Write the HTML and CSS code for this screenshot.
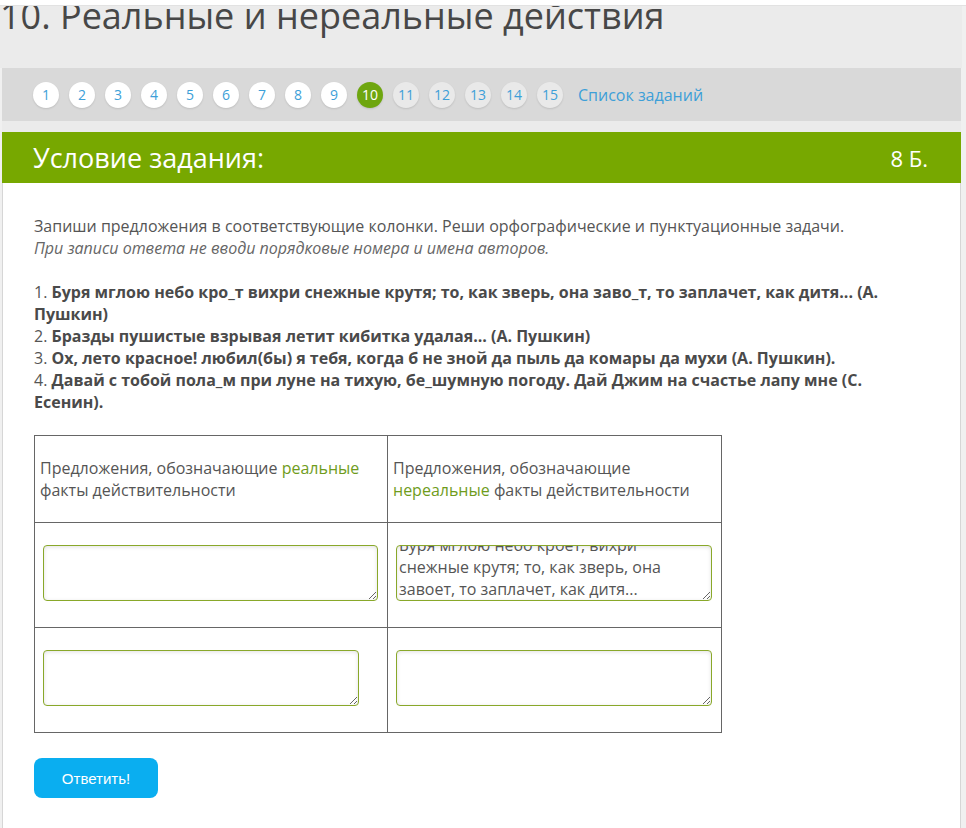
FILE: index.html
```html
<!DOCTYPE html>
<html lang="ru">
<head>
    <meta charset="UTF-8">
    <title>10. Реальные и нереальные действия</title>
    <link rel="stylesheet" href="styles.css">
</head>
<body>
    <div class="top-edge"></div>

    <h1 class="page-title">10. Реальные и нереальные действия</h1>

    <nav class="task-nav">
        <a class="task-num done" href="#">1</a>
        <a class="task-num done" href="#">2</a>
        <a class="task-num done" href="#">3</a>
        <a class="task-num done" href="#">4</a>
        <a class="task-num done" href="#">5</a>
        <a class="task-num done" href="#">6</a>
        <a class="task-num done" href="#">7</a>
        <a class="task-num done" href="#">8</a>
        <a class="task-num done" href="#">9</a>
        <a class="task-num current" href="#">10</a>
        <a class="task-num" href="#">11</a>
        <a class="task-num" href="#">12</a>
        <a class="task-num" href="#">13</a>
        <a class="task-num" href="#">14</a>
        <a class="task-num" href="#">15</a>
        <a class="task-list" href="#">Список заданий</a>
    </nav>

    <div class="task-panel">
        <div class="task-head">
            <span class="task-caption">Условие задания:</span>
            <span class="task-score">8 Б.</span>
        </div>

        <div class="task-body">
            <p class="task-text">
                Запиши предложения в соответствующие колонки. Реши орфографические и пунктуационные задачи.<br>
                <em>При записи ответа не вводи порядковые номера и имена авторов.</em>
            </p>

            <p class="task-text sentences">
                1. <b>Буря мглою небо кро_т вихри снежные крутя; то, как зверь, она заво_т, то заплачет, как дитя... (А. Пушкин)</b><br>
                2. <b>Бразды пушистые взрывая летит кибитка удалая... (А. Пушкин)</b><br>
                3. <b>Ох, лето красное! любил(бы) я тебя, когда б не зной да пыль да комары да мухи (А. Пушкин).</b><br>
                4. <b>Давай с тобой пола_м при луне на тихую, бе_шумную погоду. Дай Джим на счастье лапу мне (С. Есенин).</b>
            </p>

            <table class="answer-table">
                <tr class="head-row">
                    <td>Предложения, обозначающие <span class="accent">реальные</span> факты действительности</td>
                    <td>Предложения, обозначающие <span class="accent">нереальные</span> факты действительности</td>
                </tr>
                <tr class="input-row">
                    <td><textarea class="answer wide"></textarea></td>
                    <td><textarea class="answer scrolled" id="filled">Буря мглою небо кроет, вихри снежные крутя; то, как зверь, она завоет, то заплачет, как дитя...</textarea></td>
                </tr>
                <tr class="input-row">
                    <td><textarea class="answer"></textarea></td>
                    <td><textarea class="answer"></textarea></td>
                </tr>
            </table>

            <button class="submit-btn">Ответить!</button>
        </div>
    </div>

    <script>
        // keep the filled answer scrolled to its last line
        var filled = document.getElementById('filled');
        filled.scrollTop = filled.scrollHeight;
    </script>
</body>
</html>
```

FILE: styles.css
```css
* {
    box-sizing: border-box;
}

body {
    margin: 0;
    background: #f0f0f0;
    font-family: "Open Sans", "Noto Sans", sans-serif;
    color: #555;
}

.top-edge {
    position: fixed;
    top: 0;
    left: 0;
    right: 0;
    height: 6px;
    background: #fff;
    border-bottom: 1px solid #e2e2e2;
    z-index: 10;
}

.page-title {
    width: 962px;
    height: 74px;
    margin: -6px 0 0;
    padding: 0;
    font-size: 36px;
    font-weight: 400;
    line-height: 44px;
    color: #474747;
    background: #ebebeb;
}

/* task navigation */
.task-nav {
    width: 928px;
    height: 53px;
    margin-left: 2px;
    padding-left: 31px;
    box-sizing: content-box;
    background: #d9d9d9;
    border-bottom: 11px solid #ebebeb;
    display: flex;
    align-items: center;
    gap: 10px;
}

.task-num {
    width: 26px;
    height: 26px;
    border-radius: 50%;
    background: #e9e9e9;
    color: #3d9fd8;
    font-size: 14px;
    display: flex;
    align-items: center;
    justify-content: center;
    text-decoration: none;
    box-shadow: 0 1px 2px rgba(0, 0, 0, 0.12);
}

.task-num.done {
    background: #fff;
}

.task-num.current {
    background: #6ea60f;
    color: #fff;
}

.task-list {
    margin-left: 5px;
    color: #3d9fd8;
    font-size: 16px;
    text-decoration: none;
}

/* task panel */
.task-panel {
    width: 959px;
    margin-left: 2px;
    background: #fff;
    border-right: 1px solid #d6d6d6;
    border-left: 1px solid #d6d6d6;
}

.task-head {
    height: 51px;
    margin: 0 -1px;
    padding: 0 33px 0 31px;
    background: #77a800;
    color: #fff;
    display: flex;
    align-items: center;
    justify-content: space-between;
}

.task-caption {
    font-size: 27px;
}

.task-score {
    font-size: 22px;
}

.task-body {
    padding: 32px 31px 60px;
}

.task-text {
    margin: 0 0 22px;
    font-size: 16px;
    line-height: 22px;
    color: #555;
}

.task-text em {
    color: #666;
}

.sentences b {
    color: #4a4a4a;
}

.answer-table {
    border-collapse: collapse;
    width: 688px;
}

.answer-table td {
    border: 1px solid #666;
    vertical-align: middle;
}

.answer-table td:first-child {
    width: 353px;
}

.head-row td {
    height: 87px;
    padding: 0 5px;
    font-size: 16px;
    line-height: 22px;
    color: #555;
}

.accent {
    color: #6f9c1c;
}

.input-row td {
    height: 105px;
    padding: 0 8px;
}

.answer {
    display: block;
    width: 316px;
    height: 56px;
    margin-top: -5px;
    padding: 0 2px;
    border: 1px solid #89a82a;
    border-radius: 4px;
    box-shadow: inset 0 1px 4px rgba(0, 0, 0, 0.12);
    font-family: "Open Sans", "Noto Sans", sans-serif;
    font-size: 16px;
    line-height: 22px;
    color: #555;
    resize: both;
}

.answer.wide {
    width: 335px;
}

.answer.scrolled {
    overflow-y: scroll;
}

.answer.scrolled::-webkit-scrollbar {
    width: 13px;
}

.answer.scrolled::-webkit-scrollbar-track {
    background: #f4f4f4;
}

.answer.scrolled::-webkit-scrollbar-thumb {
    background: #d4d4d4;
    border: 3px solid #f4f4f4;
    border-left-width: 2px;
    border-right-width: 2px;
}

.answer.scrolled::-webkit-scrollbar-corner {
    background: #e4e4e4;
}

.submit-btn {
    width: 124px;
    height: 40px;
    margin-top: 25px;
    border: none;
    border-radius: 8px;
    background: #0aaef0;
    color: #fff;
    font-family: "Liberation Sans", Arial, sans-serif;
    font-size: 15px;
    cursor: pointer;
}
```
